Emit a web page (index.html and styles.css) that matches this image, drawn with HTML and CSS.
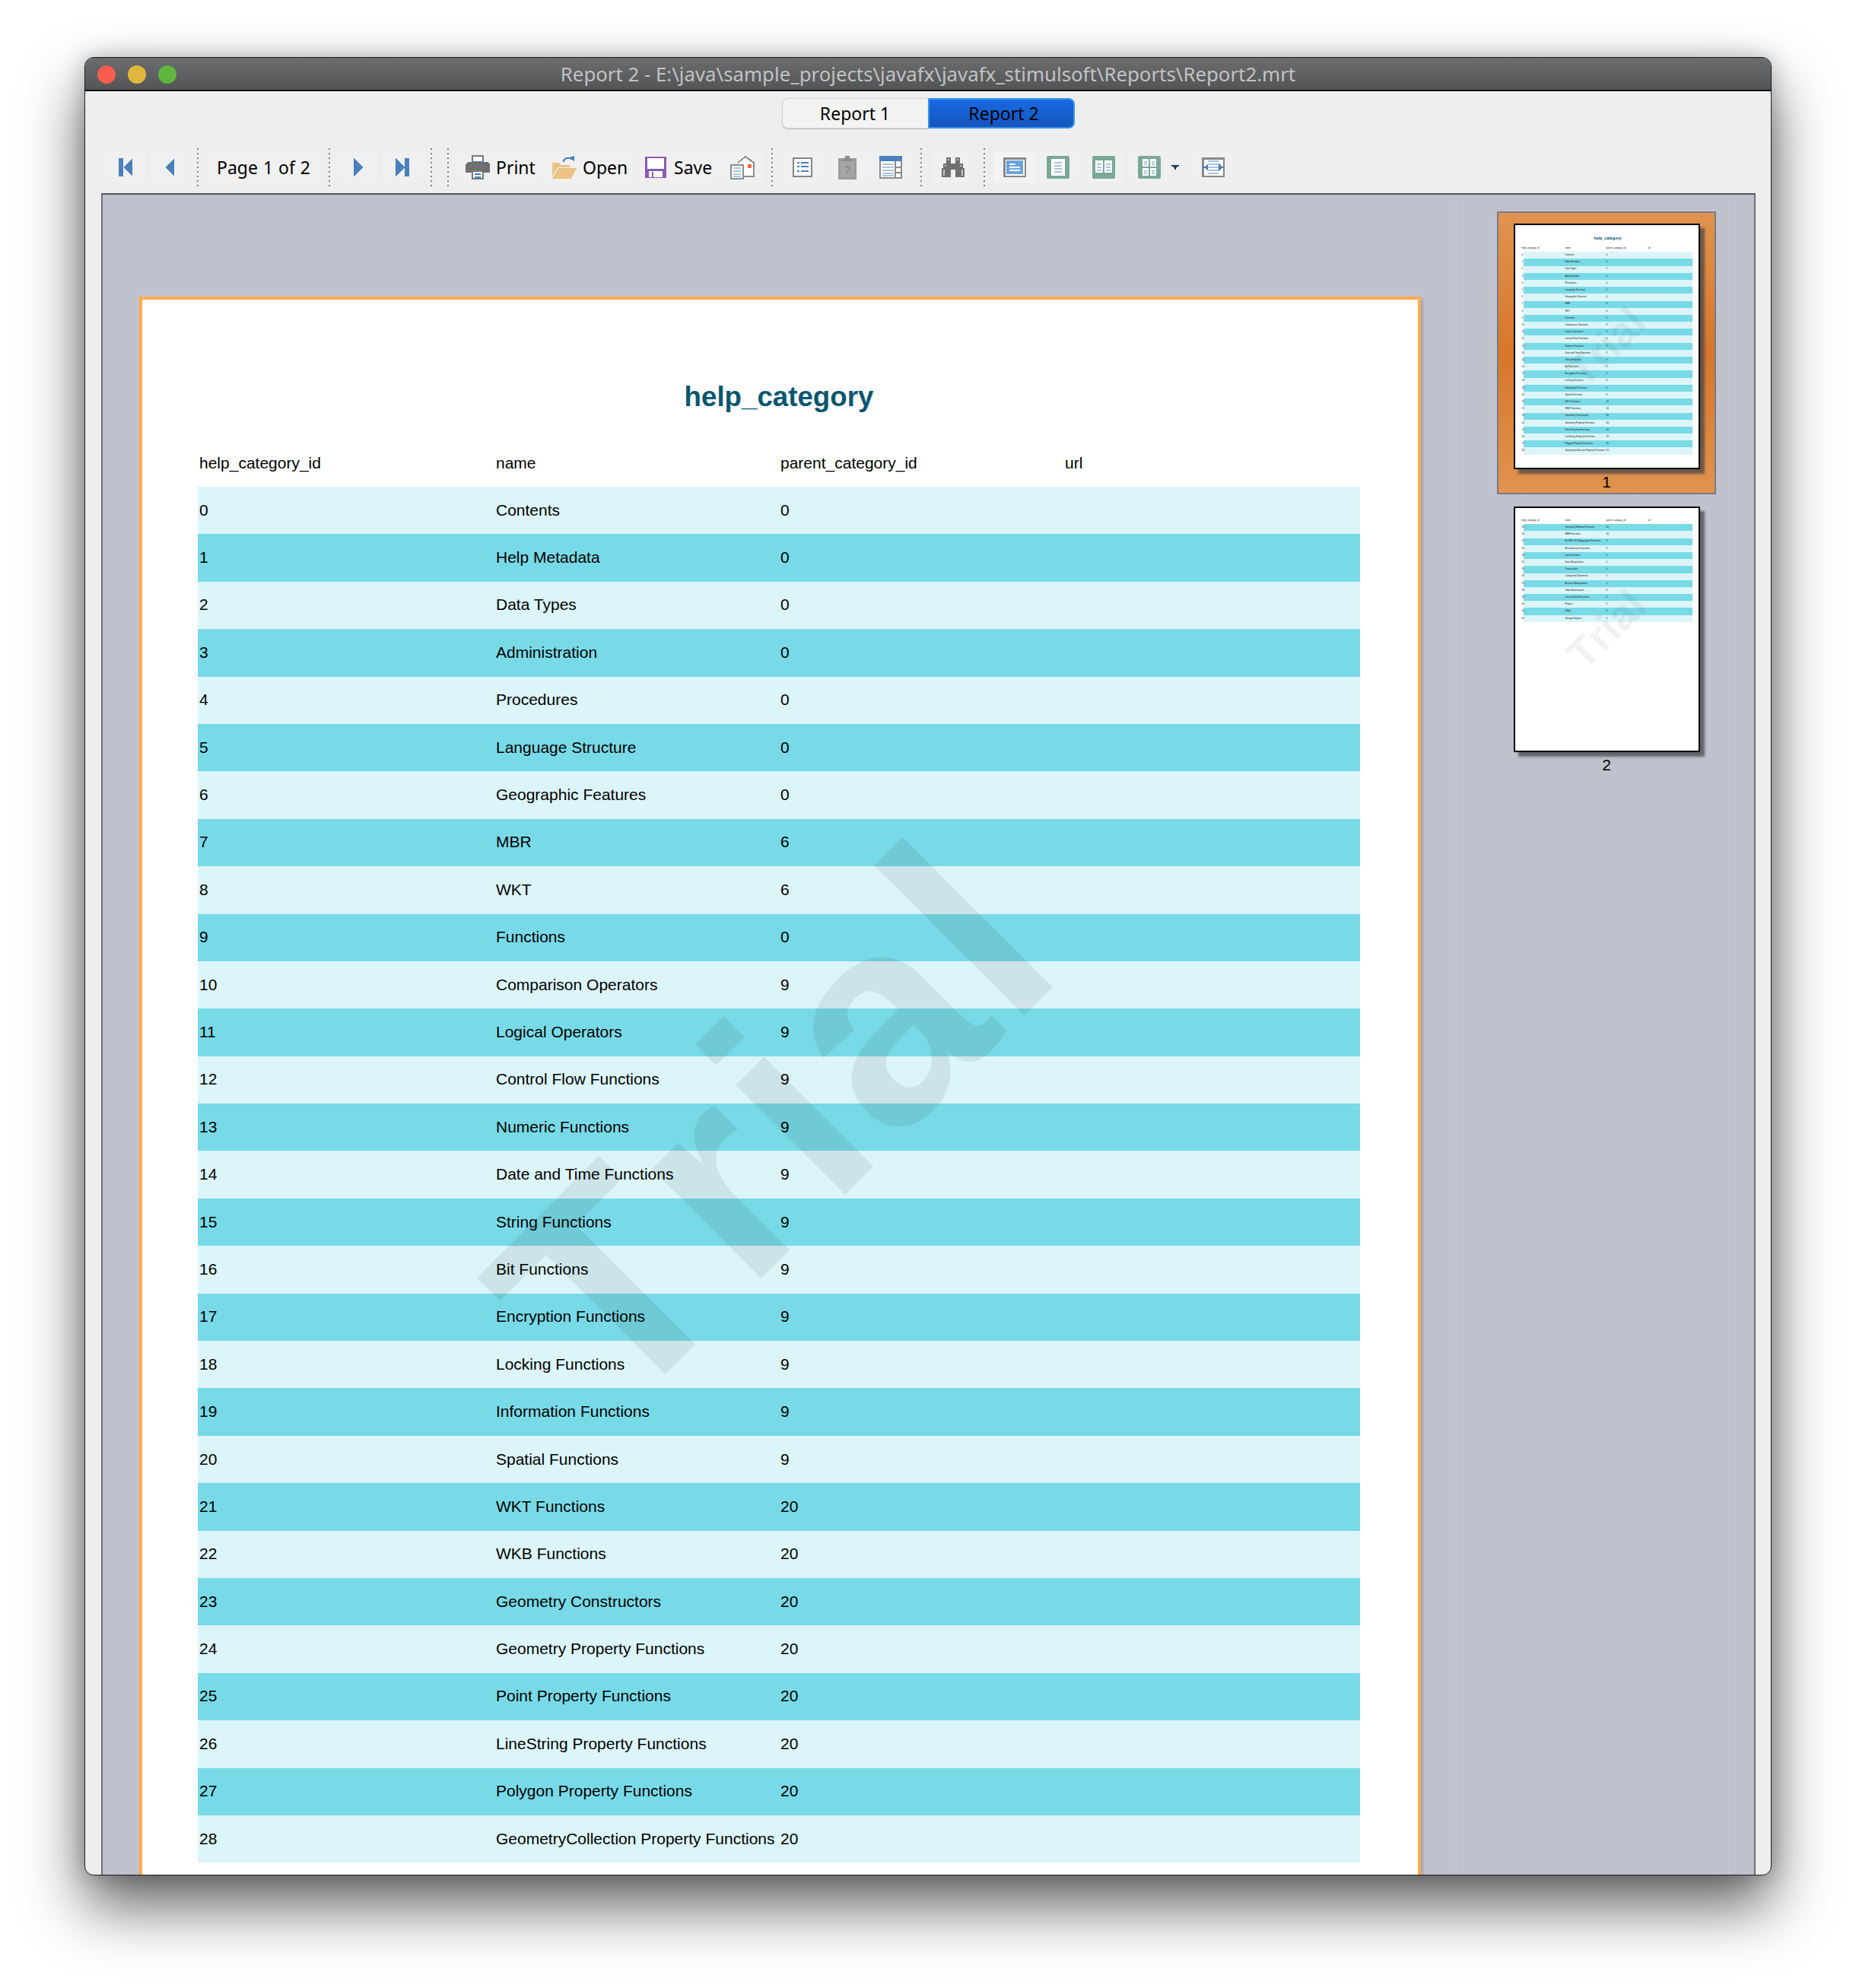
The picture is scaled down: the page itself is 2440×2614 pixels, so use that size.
FILE: index.html
```html
<!DOCTYPE html>
<html lang="en">
<head>
    <meta charset="UTF-8">
    <title>Report 2</title>
    <link rel="stylesheet" href="styles.css">
</head>
<body>

    <div class="window">

        <!-- Title bar -->
        <div class="title-bar">
            <div class="lights">
                <span class="light red"></span>
                <span class="light yellow"></span>
                <span class="light green"></span>
            </div>
            <div class="title-text">Report 2 - E:\java\sample_projects\javafx\javafx_stimulsoft\Reports\Report2.mrt</div>
        </div>

        <!-- Report tabs -->
        <div class="tabs">
            <div class="tab">Report 1</div>
            <div class="tab active">Report 2</div>
        </div>

        <!-- Toolbar -->
        <div class="toolbar">
            <div class="tool">
                <svg width="18" height="24" viewBox="0 0 18 24"><path class="ic-blue" d="M0 0h6v24H0zM18 0v24L6 12z"/></svg>
            </div>
            <div class="tool ml-4 w-53">
                <svg width="12" height="24" viewBox="0 0 12 24"><path class="ic-blue" d="M12 0v24L0 12z"/></svg>
            </div>
            <div class="sep ml-10"></div>
            <div class="tool ml-11 page-label">Page 1 of 2</div>
            <div class="sep ml-11"></div>
            <div class="tool ml-10">
                <svg width="12" height="24" viewBox="0 0 12 24"><path class="ic-blue" d="M0 0v24l12-12z"/></svg>
            </div>
            <div class="tool ml-4">
                <svg width="18" height="24" viewBox="0 0 18 24"><path class="ic-blue" d="M12 0h6v24h-6zM0 0v24l12-12z"/></svg>
            </div>
            <div class="sep ml-10"></div>
            <div class="sep ml-20"></div>

            <div class="tool ml-10 labeled print">
                <svg width="32" height="32" viewBox="0 0 32 32">
                    <rect x="9" y="1" width="14" height="10" fill="#fff" stroke="#777" stroke-width="2"/>
                    <rect x="8" y="8" width="16" height="2" fill="#4a80bb"/>
                    <path fill="#6f6f6f" d="M3 9h26l3 3v11H0V12z"/>
                    <rect x="9" y="21" width="14" height="10" fill="#fff" stroke="#777" stroke-width="2"/>
                    <path fill="#4a80bb" d="M12 24h8v2h-8zM12 28h8v2h-8z"/>
                </svg>
                Print
            </div>
            <div class="tool labeled open">
                <svg width="32" height="30" viewBox="0 0 32 30">
                    <path fill="none" stroke="#4a80bb" stroke-width="2" d="M15 8c0-6 8-7 11-3"/>
                    <path fill="#4a80bb" d="M22 2l7-2v7z"/>
                    <path fill="#ecc383" d="M0 9h8l3 3h12v3H7L1 26H0z"/>
                    <path fill="#ecc383" d="M8 16h24l-7 14H0z"/>
                </svg>
                Open
            </div>
            <div class="tool ml-4 labeled save">
                <svg width="28" height="28" viewBox="0 0 28 28">
                    <rect width="28" height="28" rx="1" fill="#8a5bb0"/>
                    <rect x="3" y="2" width="22" height="14" fill="#fff"/>
                    <rect x="5" y="19" width="18" height="8" fill="#fff"/>
                    <rect x="9" y="20" width="2" height="7" fill="#8a5bb0"/>
                </svg>
                Save
            </div>
            <div class="tool w-56">
                <svg width="32" height="32" viewBox="0 0 32 32">
                    <path fill="#fff" stroke="#8c8c8c" stroke-width="2" d="M10 10l10-8 11 8v18H12"/>
                    <rect x="1" y="13" width="16" height="18" fill="#fff" stroke="#8c8c8c" stroke-width="2"/>
                    <path fill="#a8c4de" d="M4 16h10v2H4zM4 20h10v2H4zM4 24h10v2H4zM4 27h10v2H4z"/>
                    <rect x="23" y="12" width="5" height="5" fill="#f0683c"/>
                </svg>
            </div>
            <div class="sep ml-10"></div>

            <div class="tool ml-12">
                <svg width="26" height="26" viewBox="0 0 26 26">
                    <rect x="1" y="1" width="24" height="24" fill="#fff" stroke="#858585" stroke-width="2"/>
                    <path fill="#4a80bb" d="M6 6h3v2H6zM11 6h10v2H11zM6 11h3v2H6zM11 11h10v2H11zM6 17h3v2H6zM11 17h10v2H11z"/>
                </svg>
            </div>
            <div class="tool ml-4 w-56">
                <svg width="24" height="31" viewBox="0 0 24 31">
                    <rect y="3" width="24" height="28" fill="#9b9b9b"/>
                    <path fill="#8d8d8d" d="M9 0h6v3h3v4H6V3h3z"/>
                    <rect x="3" y="7" width="18" height="21" fill="#a5a5a5"/>
                    <text class="help-mark" x="12" y="23">?</text>
                </svg>
            </div>
            <div class="tool">
                <svg width="30" height="30" viewBox="0 0 30 30">
                    <rect x="1" y="1" width="28" height="28" fill="#fff" stroke="#8c8c8c" stroke-width="2"/>
                    <rect width="30" height="7" fill="#4a80bb"/>
                    <path fill="#a8c4de" d="M4 10h15v2H4zM4 14h15v2H4zM4 18h15v2H4zM4 22h15v2H4zM4 25h15v2H4z"/>
                    <path fill="#8c8c8c" d="M20 7h2v22h-2zM22 14h7v2h-7zM22 21h7v2h-7z"/>
                </svg>
            </div>
            <div class="sep ml-12"></div>

            <div class="tool ml-14">
                <svg width="30" height="26" viewBox="0 0 30 26">
                    <path fill="#707070" d="M6 0h6v8h6V0h6v8h4v6h2v12H18V16h-6v10H0V14h2V8h4z"/>
                    <path fill="#c4c4c4" d="M2 16h2v8H2zM26 16h2v8h-2zM8 2h2v2H8zM20 2h2v2h-2zM4 10h2v2H4zM24 10h2v2h-2z"/>
                </svg>
            </div>
            <div class="sep ml-13"></div>

            <div class="tool ml-11 w-56 hover">
                <svg width="30" height="26" viewBox="0 0 30 26">
                    <rect x="1" y="1" width="28" height="24" fill="#fff" stroke="#888" stroke-width="3"/>
                    <rect x="4" y="4" width="22" height="18" fill="#6aa3dd"/>
                    <path fill="#fff" d="M8 8h8v2H8zM8 12h14v2H8zM8 16h14v2H8z"/>
                </svg>
            </div>
            <div class="tool">
                <svg width="30" height="30" viewBox="0 0 30 30">
                    <rect width="30" height="30" rx="3" fill="#7aa998"/>
                    <rect x="6" y="4" width="18" height="22" fill="#fff"/>
                    <path fill="#a8c4de" d="M10 8h10v2H10zM10 12h10v2H10zM10 16h10v2H10zM10 20h10v2H10z"/>
                </svg>
            </div>
            <div class="tool ml-6">
                <svg width="30" height="30" viewBox="0 0 30 30">
                    <rect width="30" height="30" rx="3" fill="#7aa998"/>
                    <path fill="#fff" d="M4 6h10v16H4zM16 6h10v16H16z"/>
                    <path fill="#a8c4de" d="M6 10h6v2H6zM6 14h6v2H6zM6 18h6v2H6zM18 10h6v2h-6zM18 14h6v2h-6zM18 18h6v2h-6z"/>
                </svg>
            </div>
            <div class="tool ml-6">
                <svg width="30" height="30" viewBox="0 0 30 30">
                    <rect width="30" height="30" rx="3" fill="#7aa998"/>
                    <path fill="#fff" d="M6 4h8v10H6zM16 4h8v10h-8zM6 16h8v10H6zM16 16h8v10h-8z"/>
                    <path fill="#a8c4de" d="M8 7h4v2H8zM8 10h4v2H8zM18 7h4v2h-4zM18 10h4v2h-4zM8 19h4v2H8zM8 22h4v2H8zM18 19h4v2h-4zM18 22h4v2h-4z"/>
                </svg>
            </div>
            <svg class="drop-arrow" width="10" height="6" viewBox="0 0 10 6"><path fill="#1f3a68" d="M0 0h10v2H7v2H6v2H4V4H3V2H0z"/></svg>
            <div class="tool ml-18">
                <svg width="30" height="26" viewBox="0 0 30 26">
                    <rect x="1" y="1" width="28" height="24" fill="#fff" stroke="#888" stroke-width="3"/>
                    <path fill="#a8c4de" d="M8 4h14v2H8zM8 8h14v2H8zM8 12h14v2H8zM8 16h14v2H8zM8 20h14v2H8z"/>
                    <path fill="#4a80bb" d="M1 12h3l4-4v10l-4-4H1zM29 12h-3l-4-4v10l4-4h3z"/>
                </svg>
            </div>
        </div>

        <!-- Viewer -->
        <div class="viewer">
            <div class="page-area">
                <div class="page">
                    <div class="watermark">Trial</div>
                    <div class="report-title">help_category</div>
                    <div class="row header"><span>help_category_id</span><span>name</span><span>parent_category_id</span><span>url</span></div>
                    <div class="row"><span>0</span><span>Contents</span><span>0</span></div>
                    <div class="row"><span>1</span><span>Help Metadata</span><span>0</span></div>
                    <div class="row"><span>2</span><span>Data Types</span><span>0</span></div>
                    <div class="row"><span>3</span><span>Administration</span><span>0</span></div>
                    <div class="row"><span>4</span><span>Procedures</span><span>0</span></div>
                    <div class="row"><span>5</span><span>Language Structure</span><span>0</span></div>
                    <div class="row"><span>6</span><span>Geographic Features</span><span>0</span></div>
                    <div class="row"><span>7</span><span>MBR</span><span>6</span></div>
                    <div class="row"><span>8</span><span>WKT</span><span>6</span></div>
                    <div class="row"><span>9</span><span>Functions</span><span>0</span></div>
                    <div class="row"><span>10</span><span>Comparison Operators</span><span>9</span></div>
                    <div class="row"><span>11</span><span>Logical Operators</span><span>9</span></div>
                    <div class="row"><span>12</span><span>Control Flow Functions</span><span>9</span></div>
                    <div class="row"><span>13</span><span>Numeric Functions</span><span>9</span></div>
                    <div class="row"><span>14</span><span>Date and Time Functions</span><span>9</span></div>
                    <div class="row"><span>15</span><span>String Functions</span><span>9</span></div>
                    <div class="row"><span>16</span><span>Bit Functions</span><span>9</span></div>
                    <div class="row"><span>17</span><span>Encryption Functions</span><span>9</span></div>
                    <div class="row"><span>18</span><span>Locking Functions</span><span>9</span></div>
                    <div class="row"><span>19</span><span>Information Functions</span><span>9</span></div>
                    <div class="row"><span>20</span><span>Spatial Functions</span><span>9</span></div>
                    <div class="row"><span>21</span><span>WKT Functions</span><span>20</span></div>
                    <div class="row"><span>22</span><span>WKB Functions</span><span>20</span></div>
                    <div class="row"><span>23</span><span>Geometry Constructors</span><span>20</span></div>
                    <div class="row"><span>24</span><span>Geometry Property Functions</span><span>20</span></div>
                    <div class="row"><span>25</span><span>Point Property Functions</span><span>20</span></div>
                    <div class="row"><span>26</span><span>LineString Property Functions</span><span>20</span></div>
                    <div class="row"><span>27</span><span>Polygon Property Functions</span><span>20</span></div>
                    <div class="row"><span>28</span><span>GeometryCollection Property Functions</span><span>20</span></div>
                </div>
            </div>

            <!-- Page thumbnails -->
            <div class="thumbs">
                <div class="thumb selected">
                    <div class="mini-page">
                        <div class="mini-watermark">Trial</div>
                        <div class="mini-title">help_category</div>
                        <div class="mini-row mini-header"><span>help_category_id</span><span>name</span><span>parent_category_id</span><span>url</span></div>
                        <div class="mini-row"><span>0</span><span>Contents</span><span>0</span></div>
                        <div class="mini-row"><span>1</span><span>Help Metadata</span><span>0</span></div>
                        <div class="mini-row"><span>2</span><span>Data Types</span><span>0</span></div>
                        <div class="mini-row"><span>3</span><span>Administration</span><span>0</span></div>
                        <div class="mini-row"><span>4</span><span>Procedures</span><span>0</span></div>
                        <div class="mini-row"><span>5</span><span>Language Structure</span><span>0</span></div>
                        <div class="mini-row"><span>6</span><span>Geographic Features</span><span>0</span></div>
                        <div class="mini-row"><span>7</span><span>MBR</span><span>6</span></div>
                        <div class="mini-row"><span>8</span><span>WKT</span><span>6</span></div>
                        <div class="mini-row"><span>9</span><span>Functions</span><span>0</span></div>
                        <div class="mini-row"><span>10</span><span>Comparison Operators</span><span>9</span></div>
                        <div class="mini-row"><span>11</span><span>Logical Operators</span><span>9</span></div>
                        <div class="mini-row"><span>12</span><span>Control Flow Functions</span><span>9</span></div>
                        <div class="mini-row"><span>13</span><span>Numeric Functions</span><span>9</span></div>
                        <div class="mini-row"><span>14</span><span>Date and Time Functions</span><span>9</span></div>
                        <div class="mini-row"><span>15</span><span>String Functions</span><span>9</span></div>
                        <div class="mini-row"><span>16</span><span>Bit Functions</span><span>9</span></div>
                        <div class="mini-row"><span>17</span><span>Encryption Functions</span><span>9</span></div>
                        <div class="mini-row"><span>18</span><span>Locking Functions</span><span>9</span></div>
                        <div class="mini-row"><span>19</span><span>Information Functions</span><span>9</span></div>
                        <div class="mini-row"><span>20</span><span>Spatial Functions</span><span>9</span></div>
                        <div class="mini-row"><span>21</span><span>WKT Functions</span><span>20</span></div>
                        <div class="mini-row"><span>22</span><span>WKB Functions</span><span>20</span></div>
                        <div class="mini-row"><span>23</span><span>Geometry Constructors</span><span>20</span></div>
                        <div class="mini-row"><span>24</span><span>Geometry Property Functions</span><span>20</span></div>
                        <div class="mini-row"><span>25</span><span>Point Property Functions</span><span>20</span></div>
                        <div class="mini-row"><span>26</span><span>LineString Property Functions</span><span>20</span></div>
                        <div class="mini-row"><span>27</span><span>Polygon Property Functions</span><span>20</span></div>
                        <div class="mini-row"><span>28</span><span>GeometryCollection Property Functions</span><span>20</span></div>
                    </div>
                    <div class="thumb-num">1</div>
                </div>

                <div class="thumb">
                    <div class="mini-page second">
                        <div class="mini-watermark">Trial</div>
                        <div class="mini-row mini-header"><span>help_category_id</span><span>name</span><span>parent_category_id</span><span>url</span></div>
                        <div class="mini-row"><span>29</span><span>Geometry Relation Functions</span><span>20</span></div>
                        <div class="mini-row"><span>30</span><span>MBR Functions</span><span>20</span></div>
                        <div class="mini-row"><span>31</span><span>Bit XML GTID Aggregate Functions</span><span>9</span></div>
                        <div class="mini-row"><span>32</span><span>Miscellaneous Functions</span><span>9</span></div>
                        <div class="mini-row"><span>33</span><span>Data Definition</span><span>0</span></div>
                        <div class="mini-row"><span>34</span><span>Data Manipulation</span><span>0</span></div>
                        <div class="mini-row"><span>35</span><span>Transactions</span><span>0</span></div>
                        <div class="mini-row"><span>36</span><span>Compound Statements</span><span>0</span></div>
                        <div class="mini-row"><span>37</span><span>Account Management</span><span>3</span></div>
                        <div class="mini-row"><span>38</span><span>Table Maintenance</span><span>3</span></div>
                        <div class="mini-row"><span>39</span><span>User-Defined Functions</span><span>3</span></div>
                        <div class="mini-row"><span>40</span><span>Plugins</span><span>3</span></div>
                        <div class="mini-row"><span>41</span><span>Utility</span><span>0</span></div>
                        <div class="mini-row"><span>42</span><span>Storage Engines</span><span>0</span></div>
                    </div>
                    <div class="thumb-num">2</div>
                </div>
            </div>
            <div class="rail"></div>
        </div>
    </div>

</body>
</html>
```

FILE: styles.css
```css
* {
    box-sizing: border-box;
}

body {
    margin: 0;
    height: 2614px;
    background: #fff;
    padding: 75px 0 0 111px;
    overflow: hidden;
}

.window {
    width: 2218px;
    height: 2391px;
    display: flex;
    flex-direction: column;
    background: #eeeeee;
    border: 1px solid #1c1c1c;
    border-radius: 12px;
    overflow: hidden;
    box-shadow: 0 40px 80px rgba(0, 0, 0, 0.62), 0 0 30px rgba(0, 0, 0, 0.22);
}

/* Title bar */
.title-bar {
    flex: none;
    height: 44px;
    display: grid;
    grid-template-columns: 1fr;
    align-items: center;
    position: relative;
    background: linear-gradient(#6c6d6f, #535456);
    border-bottom: 2px solid #111;
}

.lights {
    position: absolute;
    left: 16px;
    top: 10px;
    display: flex;
    gap: 16px;
}

.light {
    width: 24px;
    height: 24px;
    border-radius: 50%;
}

.red { background: #f75c4f; }
.yellow { background: #e0b73e; }
.green { background: #5fb63c; }

.title-text {
    text-align: center;
    font-family: "Noto Sans", sans-serif;
    font-size: 25.8px;
    color: #c2c2c2;
}

/* Tabs */
.tabs {
    flex: none;
    display: flex;
    justify-content: center;
    margin-top: 9px;
}

.tab {
    width: 192px;
    height: 40px;
    display: flex;
    align-items: center;
    justify-content: center;
    font-family: "Noto Sans", sans-serif;
    font-size: 23px;
    color: #000;
    background: #f3f3f3;
    border: 1px solid #d2d2d2;
    border-right: none;
    border-radius: 8px 0 0 8px;
    box-shadow: 0 1px 1px rgba(0, 0, 0, 0.2);
}

.tab.active {
    width: 193px;
    padding-left: 7px;
    background: linear-gradient(#1769e3, #1556bd);
    border: 2px solid #3a94ea;
    border-radius: 0 8px 8px 0;
    box-shadow: none;
}

/* Toolbar */
.toolbar {
    flex: none;
    display: flex;
    align-items: center;
    height: 50px;
    margin-top: 26px;
    margin-bottom: 9px;
    padding-left: 26px;
    font-family: "Noto Sans", sans-serif;
    font-size: 23px;
    color: #000;
}

.tool {
    flex: none;
    width: 54px;
    height: 40px;
    margin-left: 2px;
    display: flex;
    align-items: center;
    justify-content: center;
    background: #f0f0f0;
}

.toolbar > .tool:first-child {
    margin-left: 0;
}

.tool svg {
    shape-rendering: crispEdges;
}

.w-53 { width: 53px; }
.w-56 { width: 56px; }
.ml-4 { margin-left: 4px; }
.ml-6 { margin-left: 6px; }
.ml-10 { margin-left: 10px; }
.ml-11 { margin-left: 11px; }
.ml-12 { margin-left: 12px; }
.ml-13 { margin-left: 13px; }
.ml-14 { margin-left: 14px; }
.ml-18 { margin-left: 18px; }
.ml-20 { margin-left: 20px; }

.page-label {
    width: 149px;
    word-spacing: 1px;
}

.labeled {
    justify-content: flex-start;
    padding-left: 12px;
    gap: 8px;
}

.print { width: 112px; }
.open { width: 118px; }
.save { width: 110px; gap: 10px; }

.hover {
    background: #f3f3f3;
}

.ic-blue {
    fill: #4a80bb;
}

.help-mark {
    font-family: "Liberation Sans", sans-serif;
    font-size: 15px;
    font-weight: bold;
    fill: #8d8d8d;
    text-anchor: middle;
}

.sep {
    flex: none;
    width: 2px;
    height: 50px;
    background: repeating-linear-gradient(#808080 0 2px, transparent 2px 6px);
}

.drop-arrow {
    flex: none;
    margin-left: 2px;
    shape-rendering: crispEdges;
}

/* Viewer */
.viewer {
    flex: 1;
    min-height: 0;
    display: flex;
    margin: 0 20px 0 21px;
    background: #bfc2cc;
    border-top: 2px solid #55565c;
    border-left: 2px solid #6e6f78;
    border-right: 2px solid #6e6f78;
    overflow: hidden;
}

.page-area {
    flex: none;
    width: 1779px;
    padding: 134px 0 0 48px;
}

.page {
    position: relative;
    width: 1685px;
    height: 2222px;
    padding: 104px 76px 0 73px;
    background: #fff;
    border: 4px solid #ffab4a;
    box-shadow: 3px 3px 3px rgba(0, 0, 0, 0.15);
    overflow: hidden;
    font-family: "Liberation Sans", Arial, sans-serif;
    color: #000;
}

.report-title {
    height: 48px;
    line-height: 48px;
    margin-bottom: 32px;
    text-align: center;
    font-size: 36.7px;
    font-weight: bold;
    color: #09566f;
}

.row {
    height: 62.4px;
    display: grid;
    grid-template-columns: 390px 374px 374px 1fr;
    align-items: center;
    padding: 0 0 1px 2px;
    font-size: 21px;
    white-space: nowrap;
    background: #dcf5f9;
}

.row:nth-child(odd) {
    background: #79dae7;
}

.row.header {
    height: 62px;
    background: none;
    padding-bottom: 0;
}

.watermark {
    position: absolute;
    left: 828px;
    top: 1084px;
    transform: translate(-50%, -50%) rotate(-45deg);
    font-size: 385px;
    font-weight: bold;
    font-kerning: none;
    letter-spacing: 6px;
    line-height: 1;
    color: rgba(0, 0, 0, 0.07);
}

/* Thumbnails */
.thumbs {
    flex: none;
    width: 359px;
    display: flex;
    flex-direction: column;
    align-items: center;
    padding: 22px 0 0 37px;
    border-left: 1px solid #c6c9d2;
    border-right: 1px solid #c6c9d2;
}

.thumb {
    flex: none;
    width: 288px;
    height: 372px;
    display: flex;
    flex-direction: column;
    align-items: center;
    padding-top: 14px;
    border: 2px solid transparent;
}

.thumb.selected {
    background: linear-gradient(#e0944f, #d8762a 50%, #e0944f);
    border-color: #7a7b82;
}

.thumb-num {
    margin-top: 5px;
    font-family: "Liberation Sans", sans-serif;
    font-size: 21px;
    line-height: 24px;
    color: #000;
}

.mini-page {
    position: relative;
    flex: none;
    width: 245px;
    height: 323px;
    padding: 0 8px 0 11px;
    background: #fff;
    border: 2px solid #000;
    box-shadow: 6px 6px 3px rgba(70, 70, 75, 0.75);
    overflow: hidden;
    font-family: "Liberation Sans", sans-serif;
    font-size: 3px;
    line-height: 3.4px;
    color: #111;
}

.mini-page.second {
    padding-top: 12px;
}

.mini-title {
    margin-top: 14px;
    margin-bottom: 6px;
    height: 6px;
    line-height: 6px;
    text-align: center;
    font-size: 5.4px;
    font-weight: bold;
    color: #09566f;
}

.mini-row {
    height: 9.2px;
    display: grid;
    grid-template-columns: 55px 54px 55px 1fr;
    align-items: center;
    background: #dcf5f9;
}

.mini-row span:first-child {
    margin-left: -2px;
}

.mini-row:nth-child(odd) {
    background: #79dae7;
}

.mini-row.mini-header {
    background: none;
}

.mini-watermark {
    position: absolute;
    left: 50%;
    top: 50%;
    transform: translate(-50%, -50%) rotate(-45deg);
    font-size: 56px;
    font-weight: bold;
    font-kerning: none;
    line-height: 1;
    color: rgba(0, 0, 0, 0.05);
}

.rail {
    flex: 1;
}
```
